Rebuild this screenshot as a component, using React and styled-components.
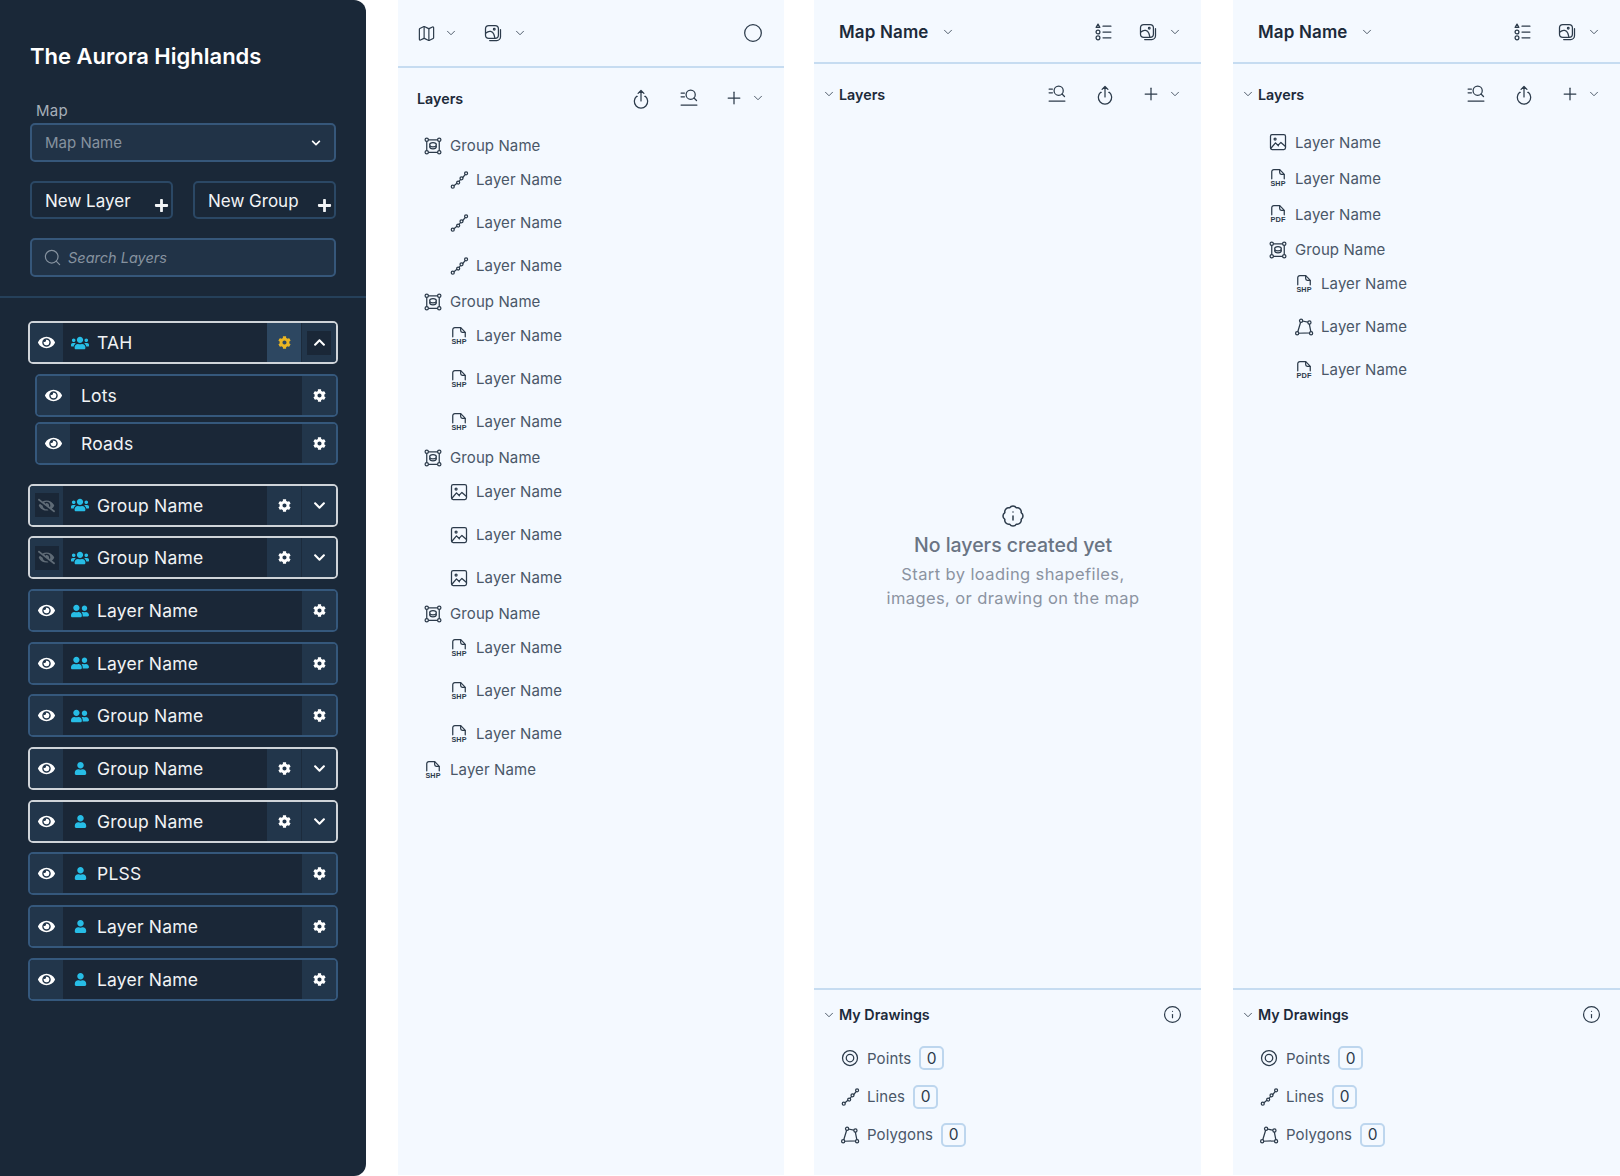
import React from 'react';
import styled, { createGlobalStyle } from 'styled-components';
import { Map as MapIcon, Plus, ChevronDown, Circle, Info, BadgeInfo, Search } from 'lucide-react';
import { FaEye, FaEyeSlash, FaCog, FaUsers, FaUserFriends, FaUser, FaChevronDown, FaChevronUp, FaPlus } from 'react-icons/fa';

const GlobalStyle = createGlobalStyle`
  html, body { margin: 0; padding: 0; background: #fff; }
  body { font-family: Inter, "Liberation Sans", sans-serif; }
  * { box-sizing: border-box; }
`;

const Page = styled.div`
  display: flex;
  width: 1620px;
  height: 1176px;
  overflow: hidden;
`;

/* ---------- dark sidebar ---------- */

const Sidebar = styled.aside`
  width: 366px;
  height: 1176px;
  flex: none;
  background: #1a2838;
  border-radius: 0 12px 12px 0;
`;

const SideHead = styled.div`
  display: flex;
  flex-direction: column;
  padding: 42px 30px 19px;
  border-bottom: 2px solid #25405a;
`;

const Title = styled.h1`
  margin: 0;
  font-size: 22px;
  line-height: 28px;
  font-weight: 600;
  color: #fff;
`;

const FieldLabel = styled.label`
  margin: 32px 0 3px 6px;
  font-size: 15px;
  line-height: 18px;
  letter-spacing: 0.3px;
  color: #a6afb9;
`;

const Field = styled.div`
  display: flex;
  align-items: center;
  height: 39px;
  padding: 0 13px 0 13px;
  background: #213347;
  border: 2px solid #36577a;
  border-radius: 5px;
  color: #86929f;
  font-size: 15px;
`;

const SelectField = styled(Field)`
  justify-content: space-between;
  color: #fff;

  span {
    color: #86929f;
  }
`;

const SearchField = styled(Field)`
  margin-top: 19px;
  gap: 6px;
  padding-left: 11px;
  font-size: 14.5px;
  font-style: italic;
`;

const ButtonRow = styled.div`
  display: flex;
  gap: 20px;
  margin-top: 19px;
`;

const NewButton = styled.button`
  flex: 1;
  display: flex;
  justify-content: space-between;
  height: 38px;
  padding: 0 2px 4px 13px;
  background: transparent;
  border: 2px solid #2b4865;
  border-radius: 5px;
  color: #f2f4f6;
  font: inherit;
  font-size: 17px;
  line-height: 36px;

  svg {
    align-self: flex-end;
  }
`;

const RowList = styled.div`
  display: flex;
  flex-direction: column;
  gap: 9.7px;
  padding: 23px 28px 0;
`;

const SubList = styled.div`
  display: flex;
  flex-direction: column;
  gap: 5px;
  margin: 0 0 9.3px 7px;
`;

const Row = styled.div`
  display: flex;
  align-items: stretch;
  height: 43px;
  background: #1a2737;
  border: 2px solid ${(p) => (p.$open ? '#cfd4d9' : '#35587c')};
  border-radius: 5px;
  overflow: hidden;
`;

const Cell = styled.div`
  flex: none;
  display: flex;
  align-items: center;
  justify-content: center;
  width: ${(p) => p.$w}px;
  background: ${(p) => p.$bg || '#22364b'};
  color: ${(p) => p.$color || '#fff'};
  border-right: ${(p) => (p.$line ? '1px solid #1c2b3c' : 'none')};
`;

const Inset = styled.div`
  display: flex;
  align-items: center;
  justify-content: center;
  width: 24px;
  height: 24px;
  background: #1a2737;
  color: ${(p) => p.$color || '#fff'};
`;

const RowName = styled.div`
  flex: 1;
  display: flex;
  align-items: center;
  gap: 8px;
  padding-left: ${(p) => p.$pad}px;
  color: #f1f3f5;
  font-size: 17.5px;
  letter-spacing: 0.2px;
`;

const RowIcon = styled.span`
  display: flex;
  justify-content: center;
  width: 18px;
  color: #27bde6;
`;

function LayerRow({ name, icon, open, expanded, hidden, sub, gold }) {
  return (
    <Row $open={open}>
      <Cell $w={33}>
        {hidden ? (
          <Inset $color="#5f6b76"><FaEyeSlash size={17} /></Inset>
        ) : (
          <FaEye size={17} />
        )}
      </Cell>
      <RowName $pad={sub ? 11 : 8}>
        {icon && <RowIcon>{icon}</RowIcon>}
        {name}
      </RowName>
      <Cell $w={open ? 35 : 34} $bg={gold ? '#2d4761' : undefined} $color={gold ? '#eab522' : undefined} $line={open}>
        <FaCog size={13} />
      </Cell>
      {open && (
        <Cell $w={34}>
          {expanded ? (
            <Inset><FaChevronUp size={13} /></Inset>
          ) : (
            <FaChevronDown size={13} />
          )}
        </Cell>
      )}
    </Row>
  );
}

/* ---------- drawn icons ---------- */

const Svg = styled.svg.attrs((p) => ({
  viewBox: '0 0 24 24',
  width: p.$size || 20,
  height: p.$size || 20,
  fill: 'none',
  stroke: 'currentColor',
  strokeWidth: 1.5,
  strokeLinecap: 'round',
  strokeLinejoin: 'round',
}))`
  flex: none;
  color: #2c3b4b;
  overflow: visible;
`;

const GroupGlyph = () => (
  <Svg>
    <rect x="4.5" y="4.5" width="15" height="15" />
    <circle cx="4.5" cy="4.5" r="2" fill="#f4f9ff" />
    <circle cx="19.5" cy="4.5" r="2" fill="#f4f9ff" />
    <circle cx="4.5" cy="19.5" r="2" fill="#f4f9ff" />
    <circle cx="19.5" cy="19.5" r="2" fill="#f4f9ff" />
    <ellipse cx="12" cy="10.5" rx="4" ry="2.6" />
    <path d="M8 12.5c0 1.6 1.8 2.8 4 2.8s4-1.2 4-2.8" />
  </Svg>
);

const LineGlyph = () => (
  <Svg>
    <circle cx="4.5" cy="20" r="1.8" />
    <circle cx="11" cy="15" r="1.8" />
    <circle cx="15" cy="10" r="1.8" />
    <circle cx="20.5" cy="4" r="1.8" />
    <path d="M6 18.8 9.5 16M12.2 13.6l1.6-2.2M16.5 9 19.4 5.5" />
  </Svg>
);

const PolygonGlyph = () => (
  <Svg>
    <path d="M8.5 4.5 18 6.5 20.5 19 4 19.5Z" />
    <circle cx="8.5" cy="4.5" r="1.9" fill="#f4f9ff" />
    <circle cx="18.5" cy="6.5" r="1.9" fill="#f4f9ff" />
    <circle cx="20.5" cy="19.5" r="1.9" fill="#f4f9ff" />
    <circle cx="3.8" cy="19.5" r="1.9" fill="#f4f9ff" />
  </Svg>
);

const PointGlyph = () => (
  <Svg>
    <circle cx="12" cy="12" r="9" />
    <circle cx="12" cy="12" r="4.5" />
  </Svg>
);

const ImageGlyph = () => (
  <Svg>
    <rect x="3" y="3" width="18" height="18" rx="2" />
    <circle cx="8.5" cy="8.5" r="1.2" />
    <path d="M3.5 19.5 9 13l3.5 3.5M12 16l3.5-3.5 5.5 5" />
  </Svg>
);

const FileLabel = styled.text`
  font-family: "Liberation Sans", sans-serif;
  font-size: 9px;
  font-weight: 700;
  fill: currentColor;
  stroke: none;
  text-anchor: middle;
`;

const FileGlyph = ({ label }) => (
  <Svg>
    <path d="M4.5 13V4.5A2.5 2.5 0 0 1 7 2h7c2 2 4.5 4 5.5 6v5" />
    <path d="M14 2v3.5a2 2 0 0 0 2 2h3.5" />
    <FileLabel x="12" y="22" textLength="18" lengthAdjust="spacingAndGlyphs">{label}</FileLabel>
  </Svg>
);

const StackGlyph = () => (
  <Svg>
    <rect x="3" y="3" width="15.5" height="15.5" rx="4" />
    <path d="M21 8v8.5a4.5 4.5 0 0 1-4.5 4.5H8" />
    <circle cx="13.5" cy="7.5" r="1" />
    <path d="M3.5 12c4-3.5 8-2 9.5 1.5.5 1.5 1 3 1.2 4.5" />
  </Svg>
);

const ListSearchGlyph = () => (
  <Svg>
    <path d="M2.5 6h4M2.5 10.5h4M2.5 20.5h19" />
    <circle cx="14" cy="8" r="5.5" />
    <path d="m18 12 3 3" />
  </Svg>
);

const UploadGlyph = () => (
  <Svg>
    <path d="M7.5 10H6.8A8 8 0 1 0 17.2 10h-.7" />
    <path d="M12 15.5V3M8.5 6.5 12 3l3.5 3.5" />
  </Svg>
);

const LegendGlyph = () => (
  <Svg>
    <path d="M6 2.5 8.2 6.5H3.8Z" />
    <circle cx="6" cy="12" r="2.3" />
    <circle cx="6" cy="19" r="2.3" />
    <path d="M12 5h9.5M12 12h9.5M12 19h9.5" />
  </Svg>
);

/* ---------- light panels ---------- */

const Panel = styled.section`
  flex: none;
  display: flex;
  flex-direction: column;
  width: ${(p) => p.$w || 387}px;
  height: 1175px;
  margin-left: ${(p) => p.$left}px;
  background: #f4f9ff;
`;

const PanelTop = styled.header`
  flex: none;
  display: flex;
  align-items: center;
  height: ${(p) => p.$h}px;
  padding: ${(p) => p.$top || 0}px ${(p) => p.$right || 19}px 0 ${(p) => p.$left || 19}px;
  border-bottom: 2px solid #c6dcf1;
`;

const MapTitle = styled.div`
  font-size: 17px;
  font-weight: 600;
  letter-spacing: 0.15px;
  color: #1c2a3a;
`;

const Spacer = styled.div`
  flex: 1;
`;

const Caret = styled(ChevronDown).attrs({ size: 14, strokeWidth: 1.5 })`
  flex: none;
  color: #3a4858;
  margin-left: ${(p) => p.$ml || 0}px;
  margin-right: ${(p) => p.$mr || 0}px;
`;

const ToolIcon = styled.span`
  display: flex;
  color: #2c3b4b;
  margin-left: ${(p) => p.$ml || 0}px;
`;

const SectionHead = styled.div`
  flex: none;
  display: flex;
  align-items: center;
  height: ${(p) => p.$h}px;
  padding: 0 19px 0 ${(p) => p.$left}px;
`;

const SectionTitle = styled.div`
  margin-left: ${(p) => p.$ml || 0}px;
  font-size: 14.3px;
  font-weight: 600;
  color: #1c2a3a;
`;

const LayersBody = styled.div`
  flex: 1;
  display: flex;
  flex-direction: column;
  min-height: 0;
`;

const Tree = styled.div`
  display: flex;
  flex-direction: column;
  padding-top: ${(p) => p.$top || 0}px;
`;

const TreeRow = styled.div`
  display: flex;
  align-items: center;
  height: ${(p) => p.$h}px;
  margin-top: ${(p) => p.$mt || 0}px;
  padding-left: ${(p) => p.$left}px;
  color: #4a5768;
  font-size: 15px;
  letter-spacing: 0.1px;

  svg {
    margin-right: ${(p) => p.$gap || 7}px;
  }
`;

const Empty = styled.div`
  flex: 1;
  display: flex;
  flex-direction: column;
  align-items: center;
  padding: 380px 0 0 11px;
  text-align: center;
  color: #8b93a1;
  font-size: 16.5px;
  line-height: 24px;
  letter-spacing: 0.4px;
`;

const EmptyTitle = styled.div`
  margin: 3px 0 3px;
  color: #6a7483;
  font-size: 19.5px;
  font-weight: 500;
  line-height: 28px;
  letter-spacing: 0;
`;

const Drawings = styled.div`
  flex: none;
  height: 187px;
  border-top: 2px solid #c6dcf1;
`;

const DrawRow = styled.div`
  display: flex;
  align-items: center;
  height: 38.4px;
  padding-left: 26px;
  color: #4a5768;
  font-size: 15px;
  letter-spacing: 0.1px;

  svg {
    margin-right: 7px;
  }
`;

const Count = styled.span`
  display: flex;
  align-items: center;
  justify-content: center;
  width: 25px;
  height: 24px;
  margin-left: 8px;
  border: 2px solid #bdd6ee;
  border-radius: 5px;
  color: #2c3b4b;
  font-size: 15.5px;
`;

const shp = <FileGlyph label="SHP" />;
const pdf = <FileGlyph label="PDF" />;

const blocks = [
  { icon: <LineGlyph /> },
  { icon: shp },
  { icon: <ImageGlyph /> },
  { icon: shp },
];

const rows = [
  { name: 'Group Name', icon: <FaUsers size={18} />, open: true, hidden: true },
  { name: 'Group Name', icon: <FaUsers size={18} />, open: true, hidden: true },
  { name: 'Layer Name', icon: <FaUserFriends size={18} /> },
  { name: 'Layer Name', icon: <FaUserFriends size={18} /> },
  { name: 'Group Name', icon: <FaUserFriends size={18} /> },
  { name: 'Group Name', icon: <FaUser size={13} />, open: true },
  { name: 'Group Name', icon: <FaUser size={13} />, open: true },
  { name: 'PLSS', icon: <FaUser size={13} /> },
  { name: 'Layer Name', icon: <FaUser size={13} /> },
  { name: 'Layer Name', icon: <FaUser size={13} /> },
];

function MapHeader() {
  return (
    <PanelTop $h={64} $top={2} $left={25} $right={19}>
      <MapTitle>Map Name</MapTitle>
      <Caret $ml={12} />
      <Spacer />
      <ToolIcon><LegendGlyph /></ToolIcon>
      <ToolIcon $ml={25}><StackGlyph /></ToolIcon>
      <Caret $ml={10} />
    </PanelTop>
  );
}

function CollapsibleHead() {
  return (
    <SectionHead $h={60} $left={8}>
      <Caret />
      <SectionTitle $ml={3}>Layers</SectionTitle>
      <Spacer />
      <ToolIcon><ListSearchGlyph /></ToolIcon>
      <ToolIcon $ml={28}><UploadGlyph /></ToolIcon>
      <ToolIcon $ml={26}><Plus size={20} strokeWidth={1.5} /></ToolIcon>
      <Caret $ml={7} />
    </SectionHead>
  );
}

function DrawingsSection() {
  return (
    <Drawings>
      <SectionHead $h={49} $left={8}>
        <Caret />
        <SectionTitle $ml={3}>My Drawings</SectionTitle>
        <Spacer />
        <ToolIcon><Info size={19} strokeWidth={1.5} /></ToolIcon>
      </SectionHead>
      <DrawRow><PointGlyph />Points<Count>0</Count></DrawRow>
      <DrawRow><LineGlyph />Lines<Count>0</Count></DrawRow>
      <DrawRow><PolygonGlyph />Polygons<Count>0</Count></DrawRow>
    </Drawings>
  );
}

export default function App() {
  return (
    <Page>
      <GlobalStyle />
      <Sidebar>
        <SideHead>
          <Title>The Aurora Highlands</Title>
          <FieldLabel>Map</FieldLabel>
          <SelectField>
            <span>Map Name</span>
            <FaChevronDown size={10} />
          </SelectField>
          <ButtonRow>
            <NewButton>New Layer<FaPlus size={15} /></NewButton>
            <NewButton>New Group<FaPlus size={15} /></NewButton>
          </ButtonRow>
          <SearchField>
            <Search size={19} strokeWidth={1.5} />
            Search Layers
          </SearchField>
        </SideHead>
        <RowList>
          <LayerRow name="TAH" icon={<FaUsers size={18} />} open expanded gold />
          <SubList>
            <LayerRow name="Lots" sub />
            <LayerRow name="Roads" sub />
          </SubList>
          {rows.map((row, idx) => (
            <LayerRow key={idx} {...row} />
          ))}
        </RowList>
      </Sidebar>

      <Panel $left={32} $w={386}>
        <PanelTop $h={68} $right={21}>
          <MapIcon size={19} strokeWidth={1.5} color="#2c3b4b" />
          <Caret $ml={8} />
          <ToolIcon $ml={25}><StackGlyph /></ToolIcon>
          <Caret $ml={10} />
          <Spacer />
          <Circle size={20} strokeWidth={1.5} color="#2c3b4b" />
        </PanelTop>
        <SectionHead $h={60} $left={19}>
          <SectionTitle>Layers</SectionTitle>
          <Spacer />
          <ToolIcon><UploadGlyph /></ToolIcon>
          <ToolIcon $ml={28}><ListSearchGlyph /></ToolIcon>
          <ToolIcon $ml={25}><Plus size={20} strokeWidth={1.5} /></ToolIcon>
          <Caret $ml={7} />
        </SectionHead>
        <Tree $top={3}>
          {blocks.map((block, i) => (
            <React.Fragment key={i}>
              <TreeRow $h={25} $mt={2} $left={25}><GroupGlyph />Group Name</TreeRow>
              {[0, 1, 2].map((n) => (
                <TreeRow key={n} $h={43} $left={51}>{block.icon}Layer Name</TreeRow>
              ))}
            </React.Fragment>
          ))}
          <TreeRow $h={25} $mt={2} $left={25}>{shp}Layer Name</TreeRow>
        </Tree>
      </Panel>

      <Panel $left={30}>
        <MapHeader />
        <LayersBody>
          <CollapsibleHead />
          <Empty>
            <BadgeInfo size={24} strokeWidth={1.5} color="#2c3b4b" />
            <EmptyTitle>No layers created yet</EmptyTitle>
            Start by loading shapefiles,
            <br />
            images, or drawing on the map
          </Empty>
        </LayersBody>
        <DrawingsSection />
      </Panel>

      <Panel $left={32}>
        <MapHeader />
        <LayersBody>
          <CollapsibleHead />
          <Tree>
            <TreeRow $h={36} $left={35}><ImageGlyph />Layer Name</TreeRow>
            <TreeRow $h={36} $left={35}>{shp}Layer Name</TreeRow>
            <TreeRow $h={36} $left={35}>{pdf}Layer Name</TreeRow>
            <TreeRow $h={25} $mt={5} $left={35}><GroupGlyph />Group Name</TreeRow>
            <TreeRow $h={43} $left={61}>{shp}Layer Name</TreeRow>
            <TreeRow $h={43} $left={61}><PolygonGlyph />Layer Name</TreeRow>
            <TreeRow $h={43} $left={61}>{pdf}Layer Name</TreeRow>
          </Tree>
        </LayersBody>
        <DrawingsSection />
      </Panel>
    </Page>
  );
}
